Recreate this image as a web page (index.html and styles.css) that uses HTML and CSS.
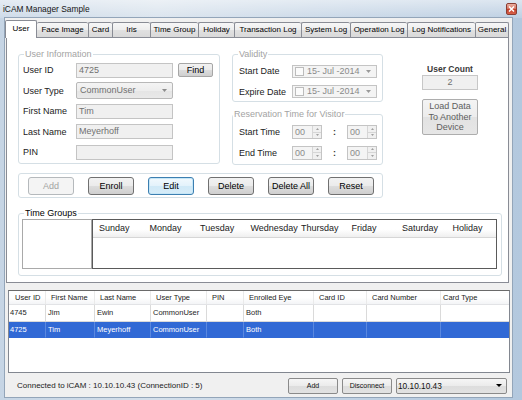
FILE: index.html
```html
<!DOCTYPE html>
<html>
<head>
<meta charset="utf-8">
<title>iCAM Manager Sample</title>
<link rel="stylesheet" href="styles.css">
</head>
<body>
<div class="window">
  <div class="titlebar">
    <span class="title">iCAM Manager Sample</span>
    <div class="close"><svg width="7" height="6" viewBox="0 0 7 6"><path d="M1 0.5 L6 5.5 M6 0.5 L1 5.5" stroke="#fff" stroke-width="1.5"/></svg></div>
  </div>
  <div class="client">
    <div class="tabcontrol">
      <div class="tabs">
        <div class="tab sel w-user">User</div>
        <div class="tab nolb w-face">Face Image</div>
        <div class="tab w-card">Card</div>
        <div class="tab w-iris">Iris</div>
        <div class="tab w-tg">Time Group</div>
        <div class="tab w-hol">Holiday</div>
        <div class="tab w-trl">Transaction Log</div>
        <div class="tab w-sys">System Log</div>
        <div class="tab w-op">Operation Log</div>
        <div class="tab w-ln">Log Notifications</div>
        <div class="tab last w-gen">General</div>
      </div>
      <div class="tabpage">
        <div class="toprow">
          <fieldset class="group userinfo">
            <legend class="dim">User Information</legend>
            <div class="frow"><span class="lbl">User ID</span><span class="tb">4725</span><span class="btn find">Find</span></div>
            <div class="frow"><span class="lbl">User Type</span><span class="tb combo"><span>CommonUser</span><svg width="5" height="3" viewBox="0 0 5 3"><path d="M0 0 H5 L2.5 3 Z" fill="#8c8c8c"/></svg></span></div>
            <div class="frow"><span class="lbl">First Name</span><span class="tb">Tim</span></div>
            <div class="frow"><span class="lbl">Last Name</span><span class="tb">Meyerhoff</span></div>
            <div class="frow"><span class="lbl">PIN</span><span class="tb"></span></div>
          </fieldset>
          <div class="midcol">
            <fieldset class="group validity">
              <legend class="dim">Validity</legend>
              <div class="frow"><span class="lbl">Start Date</span><span class="dtp"><span class="chk"></span><span class="dtxt">15- Jul -2014</span><svg width="5" height="3" viewBox="0 0 5 3"><path d="M0 0 H5 L2.5 3 Z" fill="#9a9a9a"/></svg></span></div>
              <div class="frow"><span class="lbl">Expire Date</span><span class="dtp"><span class="chk"></span><span class="dtxt">15- Jul -2014</span><svg width="5" height="3" viewBox="0 0 5 3"><path d="M0 0 H5 L2.5 3 Z" fill="#9a9a9a"/></svg></span></div>
            </fieldset>
            <fieldset class="group reservation">
              <legend class="dim">Reservation Time for Visitor</legend>
              <div class="frow"><span class="lbl">Start Time</span>
                <span class="spin"><span class="sptxt">00</span><span class="spbtns"><span class="spb"><svg width="3" height="2" viewBox="0 0 3 2"><path d="M0 2 H3 L1.5 0 Z" fill="#a0a0a0"/></svg></span><span class="spb"><svg width="3" height="2" viewBox="0 0 3 2"><path d="M0 0 H3 L1.5 2 Z" fill="#a0a0a0"/></svg></span></span></span>
                <span class="colon">:</span>
                <span class="spin"><span class="sptxt">00</span><span class="spbtns"><span class="spb"><svg width="3" height="2" viewBox="0 0 3 2"><path d="M0 2 H3 L1.5 0 Z" fill="#a0a0a0"/></svg></span><span class="spb"><svg width="3" height="2" viewBox="0 0 3 2"><path d="M0 0 H3 L1.5 2 Z" fill="#a0a0a0"/></svg></span></span></span>
              </div>
              <div class="frow"><span class="lbl">End Time</span>
                <span class="spin"><span class="sptxt">00</span><span class="spbtns"><span class="spb"><svg width="3" height="2" viewBox="0 0 3 2"><path d="M0 2 H3 L1.5 0 Z" fill="#a0a0a0"/></svg></span><span class="spb"><svg width="3" height="2" viewBox="0 0 3 2"><path d="M0 0 H3 L1.5 2 Z" fill="#a0a0a0"/></svg></span></span></span>
                <span class="colon">:</span>
                <span class="spin"><span class="sptxt">00</span><span class="spbtns"><span class="spb"><svg width="3" height="2" viewBox="0 0 3 2"><path d="M0 2 H3 L1.5 0 Z" fill="#a0a0a0"/></svg></span><span class="spb"><svg width="3" height="2" viewBox="0 0 3 2"><path d="M0 0 H3 L1.5 2 Z" fill="#a0a0a0"/></svg></span></span></span>
              </div>
            </fieldset>
          </div>
          <div class="rightcol">
            <div class="uc-label">User Count</div>
            <div class="uc-box">2</div>
            <div class="load">Load Data<br>To Another<br>Device</div>
          </div>
        </div>
        <div class="group actions">
          <span class="btn disabled">Add</span>
          <span class="btn">Enroll</span>
          <span class="btn focus">Edit</span>
          <span class="btn">Delete</span>
          <span class="btn">Delete All</span>
          <span class="btn">Reset</span>
        </div>
        <fieldset class="group timegroups">
          <legend>Time Groups</legend>
          <div class="tg-body">
            <div class="tg-list"></div>
            <div class="tg-grid">
              <div class="tg-head">
                <span>Sunday</span><span>Monday</span><span>Tuesday</span><span>Wednesday</span><span>Thursday</span><span>Friday</span><span>Saturday</span><span>Holiday</span>
              </div>
            </div>
          </div>
        </fieldset>
      </div>
    </div>
    <div class="listview">
      <div class="lv-row lv-head">
        <span>User ID</span><span>First Name</span><span>Last Name</span><span>User Type</span><span>PIN</span><span>Enrolled Eye</span><span>Card ID</span><span>Card Number</span><span class="ct">Card Type</span>
      </div>
      <div class="lv-row data">
        <span>4745</span><span>Jim</span><span>Ewin</span><span>CommonUser</span><span></span><span>Both</span><span></span><span></span><span></span>
      </div>
      <div class="lv-row data selrow">
        <span>4725</span><span>Tim</span><span>Meyerhoff</span><span>CommonUser</span><span></span><span>Both</span><span></span><span></span><span></span>
      </div>
    </div>
    <div class="statusbar">
      <span class="status">Connected to iCAM : 10.10.10.43 (ConnectionID : 5)</span>
      <span class="sbtn">Add</span>
      <span class="sbtn">Disconnect</span>
      <span class="scombo"><span>10.10.10.43</span><svg width="6" height="3" viewBox="0 0 6 3"><path d="M0 0 H6 L3 3 Z" fill="#000"/></svg></span>
    </div>
  </div>
</div>
</body>
</html>
```
FILE: styles.css
```css
* { box-sizing: border-box; }
body { margin: 0; font-family: "Liberation Sans", Arial, sans-serif; color: #1e1e1e; background: #fff; }

.window {
  width: 522px; height: 400px; overflow: hidden;
  display: flex; flex-direction: column;
  background: linear-gradient(90deg, #c6d5e5 0%, #d5e0eb 30%, #c4d4e5 60%, #b3c8de 100%);
}
.titlebar {
  height: 18px; flex: none;
  display: flex; align-items: center;
  padding: 0 5px 0 3px;
  background: linear-gradient(180deg, rgba(255,255,255,0.55) 0%, rgba(255,255,255,0.15) 100%);
}
.title { flex: 1; font-size: 8.4px; color: #151515; }
.close {
  width: 11px; height: 12px;
  border: 1px solid #8a3e33; border-radius: 2px;
  background: linear-gradient(#eab0a3 0%, #d7735f 45%, #c43e28 55%, #d8624b 100%);
  display: flex; align-items: center; justify-content: center;
}

.client {
  flex: none; width: 507px; height: 379px; margin-left: 5px;
  background: #f0f0f0;
  box-shadow: 0 0 0 1px #93a5b9;
  padding-top: 2px;
  display: flex; flex-direction: column;
}

/* tabs */
.tabcontrol { margin-left: 1px; width: 503px; }
.tabs { display: flex; align-items: flex-end; height: 17px; margin-left: -1px; }
.tab {
  height: 15px; flex: none;
  border: 1px solid #898c95; border-bottom: none; border-right: none;
  border-radius: 2px 2px 0 0;
  background: linear-gradient(#f7f7f7 0%, #ededed 50%, #e1e1e1 50%, #d9d9d9 100%);
  font-size: 8px; line-height: 14px; text-align: center; white-space: nowrap; color: #000;
}
.tab.sel {
  height: 18px; margin-bottom: -1px;
  background: #fff; border-right: 1px solid #898c95;
  position: relative; z-index: 1; line-height: 16px;
}
.tab.nolb { border-left: none; }
.tab.last { border-right: 1px solid #898c95; }
.w-user { width: 32px; }
.w-face { width: 51px; }
.w-card { width: 24px; }
.w-iris { width: 38px; }
.w-tg { width: 48px; }
.w-hol { width: 36px; }
.w-trl { width: 67px; }
.w-sys { width: 49px; }
.w-op { width: 57px; }
.w-ln { width: 68px; }
.w-gen { width: 34px; }

.tabpage {
  height: 246px;
  border: 1px solid #898c95;
  background: #fff;
  padding: 11px 0 0 11px;
  font-size: 9px;
}

/* group boxes */
.group { border: 1px solid #d5dfe5; border-radius: 3px; margin: 0; min-width: 0; padding: 0; }
legend { font-size: 9px; line-height: 10px; padding: 0 1px; color: #000; }
legend.dim { color: #a3a3a3; }

.toprow { display: flex; align-items: flex-start; }
.group.userinfo { width: 202px; height: 115px; padding: 1px 0 0 4px; margin-right: 12px; }
.userinfo legend { margin-left: 1px; }
.midcol { width: 151px; display: flex; flex-direction: column; gap: 7px; margin-right: 39px; }
.group.validity { height: 53px; padding: 1.75px 0 0 6px; }
.validity legend { margin-left: -1px; }
.group.reservation { height: 56px; padding: 2.75px 0 0 6px; }
.reservation legend { margin-left: -6px; }

.frow { display: flex; align-items: center; height: 20.5px; }
.lbl { width: 53px; flex: none; white-space: nowrap; color: #222; }
.tb {
  width: 97px; height: 15px; flex: none;
  border: 1px solid #c4c4c4; background: #f0f0f0;
  color: #707070; padding-left: 2px; line-height: 13px;
  overflow: hidden; white-space: nowrap;
}
.combo {
  height: 17px; display: flex; align-items: center; justify-content: space-between;
  padding: 0 5px 0 3px; border-color: #b8b8b8; border-radius: 2px;
  background: linear-gradient(#f4f4f4 0%, #ededed 50%, #e4e4e4 50%, #e9e9e9 100%);
}

.btn {
  display: block; flex: none;
  width: 46px; height: 18px;
  border: 1px solid #707070; border-radius: 3px;
  background: linear-gradient(#f2f2f2 0%, #ebebeb 49%, #dddddd 50%, #cfcfcf 100%);
  text-align: center; line-height: 16px; font-size: 9px; color: #000;
  white-space: nowrap;
}
.btn.disabled { border-color: #b5b9bc; background: #f4f4f4; color: #a3a3a3; }
.btn.focus {
  border-color: #3c7fb1;
  background: linear-gradient(#f2f9fd 0%, #e3f2fb 50%, #d0e9f7 50%, #d6ecf8 100%);
  box-shadow: inset 0 0 0 1px #c5e6f7;
}
.btn.find { width: 35px; height: 14px; margin-left: 5px; line-height: 12px; border-color: #a6a6a6; border-radius: 2px; }

.dtp {
  width: 85px; height: 13px; flex: none;
  border: 1px solid #c4c4c4; background: #f4f4f4;
  display: flex; align-items: center; padding: 0 5px 0 2px;
  color: #8a8a8a; white-space: nowrap;
}
.chk { width: 9px; height: 9px; flex: none; border: 1px solid #bcbcbc; background: #fbfbfb; margin-right: 3px; }
.dtxt { flex: 1; line-height: 11px; }

.spin {
  width: 30px; height: 14px; flex: none;
  border: 1px solid #c4c4c4; background: #f4f4f4;
  display: flex; align-items: stretch; color: #8a8a8a;
  padding-left: 2px;
}
.sptxt { flex: 1; line-height: 12px; }
.spbtns { width: 9px; display: flex; flex-direction: column; border-left: 1px solid #d6d6d6; }
.spb { flex: 1; display: flex; align-items: center; justify-content: center; background: #f0f0f0; }
.spb + .spb { border-top: 1px solid #d6d6d6; }
.colon { width: 25px; flex: none; text-align: center; font-weight: bold; color: #333; }

.rightcol { width: 56px; display: flex; flex-direction: column; padding-top: 15px; }
.uc-label { font-weight: bold; text-align: center; line-height: 11px; font-size: 8.5px; color: #3a3a3a; white-space: nowrap; }
.uc-box {
  height: 15px; border: 1px solid #c7c7c7; background: #f0f0f0;
  text-align: center; color: #707070; line-height: 13px;
}
.load {
  margin-top: 9px; height: 36px;
  border: 1px solid #adadad; border-radius: 2px;
  background: linear-gradient(#f4f4f4 0%, #ececec 50%, #e2e2e2 50%, #e6e6e6 100%);
  color: #5e5e5e; text-align: center; line-height: 10.5px;
  display: flex; align-items: center; justify-content: center;
}

.group.actions {
  width: 365px; height: 25px; margin-top: 8px;
  padding: 3px 0 0 9px;
  display: flex; gap: 14px; align-items: flex-start;
}

.group.timegroups { width: 484px; height: 68px; margin-top: 10px; padding: 1px 0 0 3px; }
.timegroups legend { margin-left: 2px; }
.tg-body { display: flex; }
.tg-list { width: 70px; height: 50px; border: 1px solid #a9a9a9; background: #fff; }
.tg-grid { width: 405px; height: 50px; border: 1px solid #5a5a5a; background: #fff; }
.tg-head {
  display: grid; grid-template-columns: repeat(8, 50.5px);
  height: 18px;
  background: linear-gradient(#fff 0%, #fff 55%, #efefef 100%);
  border-bottom: 1px solid #d6d6d6;
}
.tg-head span { padding-left: 6px; line-height: 17px; white-space: nowrap; color: #222; }

/* list view */
.listview {
  margin: 7px 0 0 3px; width: 502px; height: 83px; flex: none;
  border: 1px solid #828790; border-top-color: #6a6a6a;
  background: #fff; font-size: 7.5px;
}
.lv-row { display: grid; grid-template-columns: 37px 49px 56px 56px 37px 70px 53px 74px 1fr; }
.lv-head {
  height: 14px;
  background: linear-gradient(#fff 0%, #fff 50%, #f3f4f6 100%);
  border-bottom: 1px solid #e2e3e6;
}
.lv-head span { padding-left: 5px; line-height: 13px; border-right: 1px solid #eaeaea; white-space: nowrap; overflow: hidden; color: #222; }
.lv-head span:first-child { padding-left: 6px; }
.lv-head .ct { padding-left: 2px; border-right: none; }
.data { height: 16.5px; }
.data span {
  padding-left: 2px; line-height: 15.5px;
  border-right: 1px solid #dadada; border-bottom: 1px solid #dadada;
  white-space: nowrap; overflow: hidden;
}
.data span:first-child { padding-left: 1px; }
.data span:last-child { border-right: none; }
.selrow { background: #3169d5; color: #fff; }
.selrow span { border-right-color: #5a88df; border-bottom-color: #3169d5; }

/* status bar */
.statusbar {
  height: 24px; flex: none;
  display: flex; align-items: center;
  padding: 1px 5px 0 12px;
  font-size: 8px;
}
.status { flex: 1; white-space: nowrap; color: #222; }
.sbtn {
  width: 50px; height: 16px; margin-right: 4px;
  border: 1px solid #8a8a8a; border-radius: 2px;
  background: linear-gradient(#f6f6f6 0%, #ebebeb 50%, #dddddd 50%, #e2e2e2 100%);
  font-size: 7px; text-align: center; line-height: 14px; color: #111;
}
.scombo {
  width: 111px; height: 16px;
  border: 1px solid #8a8a8a; border-radius: 2px;
  background: linear-gradient(#f6f6f6 0%, #ebebeb 50%, #dddddd 50%, #e2e2e2 100%);
  display: flex; align-items: center; justify-content: space-between;
  padding: 0 4px 0 1px; font-size: 8.3px; color: #111;
}
```
